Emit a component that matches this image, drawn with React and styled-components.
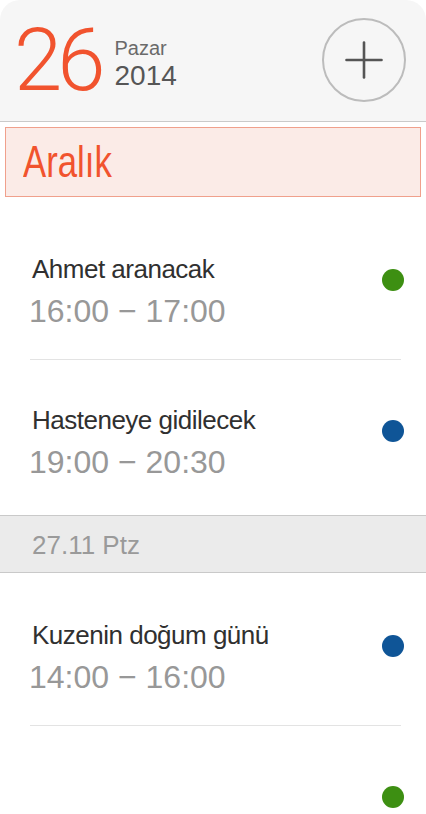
import styled, { createGlobalStyle } from 'styled-components';

const GlobalStyle = createGlobalStyle`
	html, body {
		margin: 0;
		padding: 0;
		background: #ffffff;
		overflow: hidden;
		font-family: "Liberation Sans", Arial, sans-serif;
	}
`;

const items = [
	{ type: 'event', title: 'Ahmet aranacak', time: '16:00 − 17:00', color: '#3d8f12' },
	{ type: 'event', title: 'Hasteneye gidilecek', time: '19:00 − 20:30', color: '#0f5597' },
	{ type: 'day', label: '27.11 Ptz' },
	{ type: 'event', title: 'Kuzenin doğum günü', time: '14:00 − 16:00', color: '#0f5597' },
	{ type: 'event', title: '', time: '', color: '#3d8f12' },
];

const PlusIcon = () => (
	<svg width="38" height="38" viewBox="0 0 38 38">
		<line x1="19" y1="1.5" x2="19" y2="36.5" stroke="#555" strokeWidth="2.6" strokeLinecap="round" />
		<line x1="1.5" y1="19" x2="36.5" y2="19" stroke="#555" strokeWidth="2.6" strokeLinecap="round" />
	</svg>
);

const App = () => {
	return (
		<Screen>
			<GlobalStyle />
			<Header>
				<DateBlock>
					<DayNumber>26</DayNumber>
					<DayMeta>
						<DayName>Pazar</DayName>
						<Year>2014</Year>
					</DayMeta>
				</DateBlock>
				<AddButton aria-label="Ekle">
					<PlusIcon />
				</AddButton>
			</Header>
			<MonthBar>
				<MonthLabel>Aralık</MonthLabel>
			</MonthBar>
			<List>
				{items.map((item, i) => {
					if (item.type === 'day') {
						return <DayHeader key={i}>{item.label}</DayHeader>;
					}
					const prev = items[i - 1];
					return (
						<div key={i}>
							{prev && prev.type === 'event' && <Divider />}
							<EventRow>
								<EventText>
									<EventTitle>{item.title}</EventTitle>
									<EventTime>{item.time}</EventTime>
								</EventText>
								<Dot $color={item.color} />
							</EventRow>
						</div>
					);
				})}
			</List>
		</Screen>
	);
};

const Screen = styled.div`
	width: 426px;
	height: 814px;
	overflow: hidden;
	background: #ffffff;
`;
const Header = styled.header`
	height: 121px;
	display: flex;
	align-items: center;
	justify-content: space-between;
	padding: 0 20px 0 17px;
	background: #f6f6f6;
	border-radius: 20px 20px 0 0;
	border-bottom: 1px solid #cacaca;
`;
const DateBlock = styled.div`
	display: flex;
	align-items: center;
`;
const DayNumber = styled.div`
	font-family: Roboto, "Liberation Sans", sans-serif;
	font-weight: 300;
	font-size: 87px;
	line-height: 87px;
	height: 87px;
	letter-spacing: -5px;
	color: #f1532e;
	margin-left: -3px;
`;
const DayMeta = styled.div`
	display: flex;
	flex-direction: column;
	gap: 4px;
	padding-top: 7px;
	margin-left: 14px;
`;
const DayName = styled.div`
	font-size: 20px;
	line-height: 20px;
	color: #6a6a6a;
`;
const Year = styled.div`
	font-size: 28px;
	line-height: 28px;
	color: #565656;
`;
const AddButton = styled.button`
	width: 84px;
	height: 84px;
	border-radius: 50%;
	border: 2px solid #bcbcbc;
	background: #f6f6f6;
	display: flex;
	align-items: center;
	justify-content: center;
	padding: 0;
	margin-top: -1px;
`;
const MonthBar = styled.div`
	margin: 5px 5px 12px;
	height: 68px;
	line-height: 68px;
	padding-left: 17px;
	background: #fbebe7;
	border: 1px solid #f0a08c;
	color: #f1532e;
	font-size: 44px;
`;
const MonthLabel = styled.span`
	display: inline-block;
	transform: scaleX(0.79);
	transform-origin: left center;
`;
const List = styled.div`
	display: flex;
	flex-direction: column;
`;
const Divider = styled.div`
	height: 1px;
	margin: 0 25px 0 30px;
	background: #e3e3e3;
`;
const EventRow = styled.div`
	display: flex;
	justify-content: space-between;
	align-items: flex-start;
	padding: 44px 22px 22px 32px;
`;
const EventText = styled.div`
	display: flex;
	flex-direction: column;
`;
const EventTitle = styled.div`
	height: 32px;
	line-height: 32px;
	font-size: 26px;
	letter-spacing: -0.5px;
	color: #303030;
	white-space: nowrap;
`;
const EventTime = styled.div`
	height: 52px;
	line-height: 52px;
	font-size: 32px;
	margin-left: -3px;
	color: #989898;
	white-space: nowrap;
`;
const Dot = styled.span`
	width: 22px;
	height: 22px;
	margin-top: 16px;
	border-radius: 50%;
	background: ${(p) => p.$color};
	flex-shrink: 0;
`;
const DayHeader = styled.div`
	height: 53px;
	line-height: 53px;
	padding-top: 3px;
	margin: 5px 0 2px;
	padding-left: 32px;
	background: #ebebeb;
	border-top: 1px solid #c9c9c9;
	border-bottom: 1px solid #c9c9c9;
	font-size: 26px;
	color: #9a9a9a;
`;

export default App;
